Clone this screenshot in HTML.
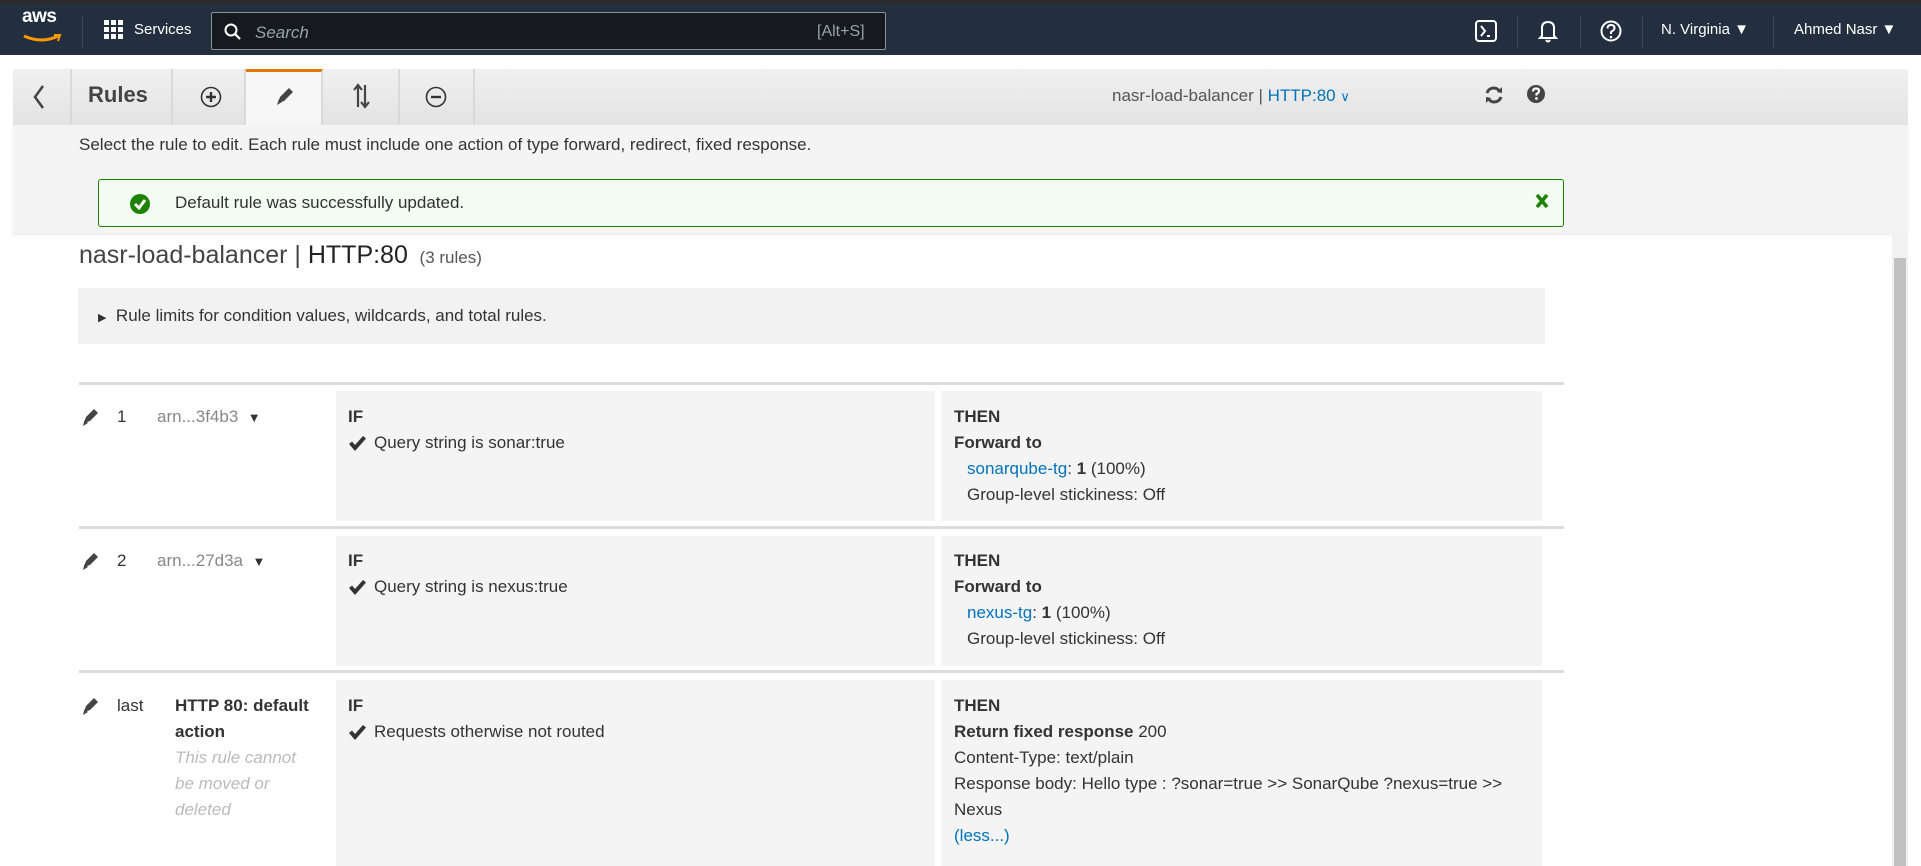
<!DOCTYPE html>
<html><head><meta charset="utf-8"><style>
*{box-sizing:border-box;margin:0;padding:0}
body{width:1921px;height:866px;overflow:hidden;background:#fff;font-family:"Liberation Sans",Arial,sans-serif;color:#333;font-size:17px;position:relative}
.abs{position:absolute}
.nav{left:0;top:0;width:1921px;height:55px;background:#232f3e;border-top:4px solid #2b2b2b}
.nav .t{color:#fff;font-size:15px;position:absolute;top:17px}
.sep{position:absolute;top:12px;width:1px;height:32px;background:#3c4654}
.tb{left:13px;top:69px;width:1895px;height:56px;background:linear-gradient(#f0f0f0,#e3e3e3)}
.tab{position:absolute;top:0;height:56px;border-right:2px solid #d9d9d9}
.panel{left:13px;top:125px;width:1895px;height:108px;background:#f4f4f4;box-shadow:0 2px 3px rgba(0,0,0,.08)}
.cell{position:absolute;background:#f4f4f4}
.line{position:absolute;left:79px;width:1485px;height:3px;background:#dcdcdc}
.tx{position:absolute;white-space:nowrap;line-height:26px}
a,.lnk{color:#0073bb;text-decoration:none}
b{color:#333}
</style></head><body>
<div class="abs nav">
  <div class="t" style="left:22px;top:2px;font-size:19px;font-weight:bold;letter-spacing:-0.5px">aws</div>
  <svg class="abs" style="left:22px;top:30px" width="40" height="10"><path d="M2 2 Q20 10 36 2" stroke="#f90" stroke-width="3" fill="none"/><path d="M32 1 L38 1 L36 7" stroke="#f90" stroke-width="2" fill="none"/></svg>
  <div class="sep" style="left:82px"></div>
  <svg class="abs" style="left:104px;top:16px" width="20" height="20" fill="#fff"><rect x="0" y="0" width="5" height="5"/><rect x="7" y="0" width="5" height="5"/><rect x="14" y="0" width="5" height="5"/><rect x="0" y="7" width="5" height="5"/><rect x="7" y="7" width="5" height="5"/><rect x="14" y="7" width="5" height="5"/><rect x="0" y="14" width="5" height="5"/><rect x="7" y="14" width="5" height="5"/><rect x="14" y="14" width="5" height="5"/></svg>
  <div class="t" style="left:134px">Services</div>
  <div class="abs" style="left:211px;top:8px;width:675px;height:38px;background:#16191f;border:1px solid #879596;border-radius:2px"></div>
  <svg class="abs" style="left:224px;top:19px" width="18" height="18"><circle cx="7" cy="7" r="5.5" stroke="#fff" stroke-width="2" fill="none"/><path d="M11 11 L16 16" stroke="#fff" stroke-width="2.2"/></svg>
  <div class="t" style="left:255px;font-style:italic;color:#95a5a6;font-size:17px;top:19px">Search</div>
  <div class="t" style="left:817px;color:#95a5a6;font-size:16px;top:19px">[Alt+S]</div>
  <svg class="abs" style="left:1475px;top:16px" width="22" height="22"><rect x="1" y="1" width="20" height="20" rx="3" stroke="#fff" stroke-width="2" fill="none"/><path d="M6 6 L10 11 L6 16" stroke="#fff" stroke-width="2" fill="none"/><path d="M12 16 L15 16" stroke="#fff" stroke-width="2"/></svg>
  <div class="sep" style="left:1517px"></div>
  <svg class="abs" style="left:1538px;top:15px" width="20" height="24"><path d="M4 17 L4 9 Q4 3 10 3 Q16 3 16 9 L16 17 L18 19 L2 19 Z" stroke="#fff" stroke-width="2" fill="none"/><path d="M8 21 Q10 24 12 21" stroke="#fff" stroke-width="2" fill="none"/></svg>
  <div class="sep" style="left:1580px"></div>
  <svg class="abs" style="left:1600px;top:16px" width="22" height="22"><circle cx="11" cy="11" r="9.5" stroke="#fff" stroke-width="2" fill="none"/><path d="M7.5 8.5 Q7.5 5 11 5 Q14.5 5 14.5 8 Q14.5 10 11 12 L11 14" stroke="#fff" stroke-width="2" fill="none"/><circle cx="11" cy="17" r="1.3" fill="#fff"/></svg>
  <div class="sep" style="left:1642px"></div>
  <div class="t" style="left:1661px">N. Virginia ▼</div>
  <div class="sep" style="left:1773px"></div>
  <div class="t" style="left:1794px">Ahmed Nasr ▼</div>
</div>

<div class="abs tb">
  <div class="tab" style="left:0;width:59px"><svg class="abs" style="left:19px;top:15px" width="14" height="26"><path d="M11 2 L3 13 L11 24" stroke="#444" stroke-width="2.5" fill="none"/></svg></div>
  <div class="tab" style="left:61px;width:99px"><div class="tx" style="left:14px;top:13px;font-size:22px;font-weight:bold;color:#444">Rules</div></div>
  <div class="tab" style="left:162px;width:71px"><svg class="abs" style="left:25px;top:17px" width="22" height="22"><circle cx="11" cy="11" r="9.5" stroke="#333" stroke-width="1.6" fill="none"/><path d="M11 6 V16 M6 11 H16" stroke="#333" stroke-width="2.4"/></svg></div>
  <div class="tab" style="left:233px;width:77px;background:#f7f7f7;border-top:3px solid #e07b00"><svg class="abs" style="left:28px;top:13px" width="22" height="22"><path d="M4 18 L6 12 L15 3 L19 7 L10 16 Z" fill="#444"/><path d="M3 20 L5 14 L8 17 Z" fill="#444"/></svg></div>
  <div class="tab" style="left:312px;width:75px"><svg class="abs" style="left:27px;top:14px" width="20" height="26"><path d="M6 24 V3 M2 7 L6 2 L10 7" stroke="#444" stroke-width="2.2" fill="none"/><path d="M13 2 V23 M9 19 L13 24 L17 19" stroke="#444" stroke-width="2.2" fill="none"/></svg></div>
  <div class="tab" style="left:387px;width:75px"><svg class="abs" style="left:25px;top:17px" width="22" height="22"><circle cx="11" cy="11" r="9.5" stroke="#333" stroke-width="1.6" fill="none"/><path d="M6 11 H16" stroke="#333" stroke-width="2.4"/></svg></div>
  <div class="tx" style="left:1099px;top:14px;color:#555;font-size:17px">nasr-load-balancer <span style="color:#555">|</span> <span class="lnk">HTTP:80</span> <span class="lnk" style="font-size:13px">&#8744;</span></div>
  <svg class="abs" style="left:1471px;top:15px" width="20" height="22"><path d="M16 8 A7 7 0 0 0 3 9" stroke="#444" stroke-width="3" fill="none"/><path d="M4 14 A7 7 0 0 0 17 13" stroke="#444" stroke-width="3" fill="none"/><path d="M13 8 L18 9 L18 3 Z" fill="#444"/><path d="M7 14 L2 13 L2 19 Z" fill="#444"/></svg>
  <svg class="abs" style="left:1513px;top:14px" width="20" height="22"><circle cx="10" cy="11" r="9" fill="#444"/><path d="M7 8.5 Q7 5.5 10 5.5 Q13 5.5 13 8 Q13 9.8 10.5 11 L10.5 12.5" stroke="#fff" stroke-width="2.2" fill="none"/><circle cx="10.5" cy="15.5" r="1.4" fill="#fff"/></svg>
</div>
<div class="abs panel">
  <div class="tx" style="left:66px;top:7px;font-size:17px">Select the rule to edit. Each rule must include one action of type forward, redirect, fixed response.</div>
  <div class="abs" style="left:85px;top:54px;width:1466px;height:48px;background:#f2fcf3;border:1px solid #1d8102;border-radius:3px">
    <svg class="abs" style="left:30px;top:13px" width="22" height="22"><circle cx="11" cy="11" r="10" fill="#1d8102"/><path d="M6 11 L10 15 L16 7" stroke="#fff" stroke-width="3" fill="none"/></svg>
    <div class="tx" style="left:76px;top:10px">Default rule was successfully updated.</div>
    <svg class="abs" style="left:1436px;top:13px" width="14" height="16"><path d="M2 2 L12 14 M12 2 L2 14" stroke="#1d8102" stroke-width="3.5"/></svg>
  </div>
</div>

<div class="tx" style="left:79px;top:242px;font-size:25px;color:#444">nasr-load-balancer | <span style="color:#222">HTTP:80</span> <span style="font-size:17px;color:#555">&nbsp;(3 rules)</span></div>
<div class="abs" style="left:78px;top:288px;width:1467px;height:56px;background:#f2f2f2"></div>
<div class="tx" style="left:98px;top:303px"><span style="font-size:11px">&#9654;</span>&nbsp; Rule limits for condition values, wildcards, and total rules.</div>

<div class="line" style="top:382px"></div>
<div class="line" style="top:526px"></div>
<div class="line" style="top:670px"></div>

<div class="cell" style="left:336px;top:391px;width:599px;height:130px"></div>
<div class="cell" style="left:941px;top:391px;width:601px;height:130px"></div>
<div class="cell" style="left:336px;top:536px;width:599px;height:130px"></div>
<div class="cell" style="left:941px;top:536px;width:601px;height:130px"></div>
<div class="cell" style="left:336px;top:680px;width:599px;height:186px"></div>
<div class="cell" style="left:941px;top:680px;width:601px;height:186px"></div>

<svg width="0" height="0" style="position:absolute"><defs><g id="pen"><path d="M3 16 L5 10 L13 2 L17 6 L9 14 Z" fill="#444"/><path d="M2 19 L3.5 13 L7 16 Z" fill="#444"/></g><g id="chk"><path d="M0 8 L3 5.5 L6 9 L14 0 L17 2.5 L6 15 Z" fill="#333"/></g></defs></svg>

<!-- row 1 -->
<svg class="abs" style="left:81px;top:407px" width="20" height="20"><use href="#pen"/></svg>
<div class="tx" style="left:117px;top:404px">1</div>
<div class="tx" style="left:157px;top:404px;color:#888">arn...3f4b3 &nbsp;<span style="color:#333;font-size:13px">▼</span></div>
<div class="tx" style="left:348px;top:404px;font-weight:bold">IF</div>
<svg class="abs" style="left:349px;top:436px" width="18" height="16"><use href="#chk"/></svg>
<div class="tx" style="left:374px;top:430px">Query string is sonar:true</div>
<div class="tx" style="left:954px;top:404px;font-weight:bold">THEN</div>
<div class="tx" style="left:954px;top:430px;font-weight:bold">Forward to</div>
<div class="tx" style="left:967px;top:456px"><a>sonarqube-tg</a>: <b>1</b> (100%)</div>
<div class="tx" style="left:967px;top:482px">Group-level stickiness: Off</div>

<!-- row 2 -->
<svg class="abs" style="left:81px;top:551px" width="20" height="20"><use href="#pen"/></svg>
<div class="tx" style="left:117px;top:548px">2</div>
<div class="tx" style="left:157px;top:548px;color:#888">arn...27d3a &nbsp;<span style="color:#333;font-size:13px">▼</span></div>
<div class="tx" style="left:348px;top:548px;font-weight:bold">IF</div>
<svg class="abs" style="left:349px;top:580px" width="18" height="16"><use href="#chk"/></svg>
<div class="tx" style="left:374px;top:574px">Query string is nexus:true</div>
<div class="tx" style="left:954px;top:548px;font-weight:bold">THEN</div>
<div class="tx" style="left:954px;top:574px;font-weight:bold">Forward to</div>
<div class="tx" style="left:967px;top:600px"><a>nexus-tg</a>: <b>1</b> (100%)</div>
<div class="tx" style="left:967px;top:626px">Group-level stickiness: Off</div>

<!-- row 3 -->
<svg class="abs" style="left:81px;top:696px" width="20" height="20"><use href="#pen"/></svg>
<div class="tx" style="left:117px;top:693px">last</div>
<div class="tx" style="left:175px;top:693px;font-weight:bold">HTTP 80: default</div>
<div class="tx" style="left:175px;top:719px;font-weight:bold">action</div>
<div class="tx" style="left:175px;top:745px;font-style:italic;color:#bbb">This rule cannot</div>
<div class="tx" style="left:175px;top:771px;font-style:italic;color:#bbb">be moved or</div>
<div class="tx" style="left:175px;top:797px;font-style:italic;color:#bbb">deleted</div>
<div class="tx" style="left:348px;top:693px;font-weight:bold">IF</div>
<svg class="abs" style="left:349px;top:725px" width="18" height="16"><use href="#chk"/></svg>
<div class="tx" style="left:374px;top:719px">Requests otherwise not routed</div>
<div class="tx" style="left:954px;top:693px;font-weight:bold">THEN</div>
<div class="tx" style="left:954px;top:719px"><b>Return fixed response</b> 200</div>
<div class="tx" style="left:954px;top:745px">Content-Type: text/plain</div>
<div class="tx" style="left:954px;top:771px">Response body: Hello type : ?sonar=true &gt;&gt; SonarQube ?nexus=true &gt;&gt;</div>
<div class="tx" style="left:954px;top:797px">Nexus</div>
<div class="tx lnk" style="left:954px;top:823px">(less...)</div>

<!-- scrollbar -->
<div class="abs" style="left:1892px;top:235px;width:16px;height:631px;background:#f1f1f1"></div>
<div class="abs" style="left:1894px;top:258px;width:12px;height:608px;background:#c1c1c1"></div>
</body></html>
